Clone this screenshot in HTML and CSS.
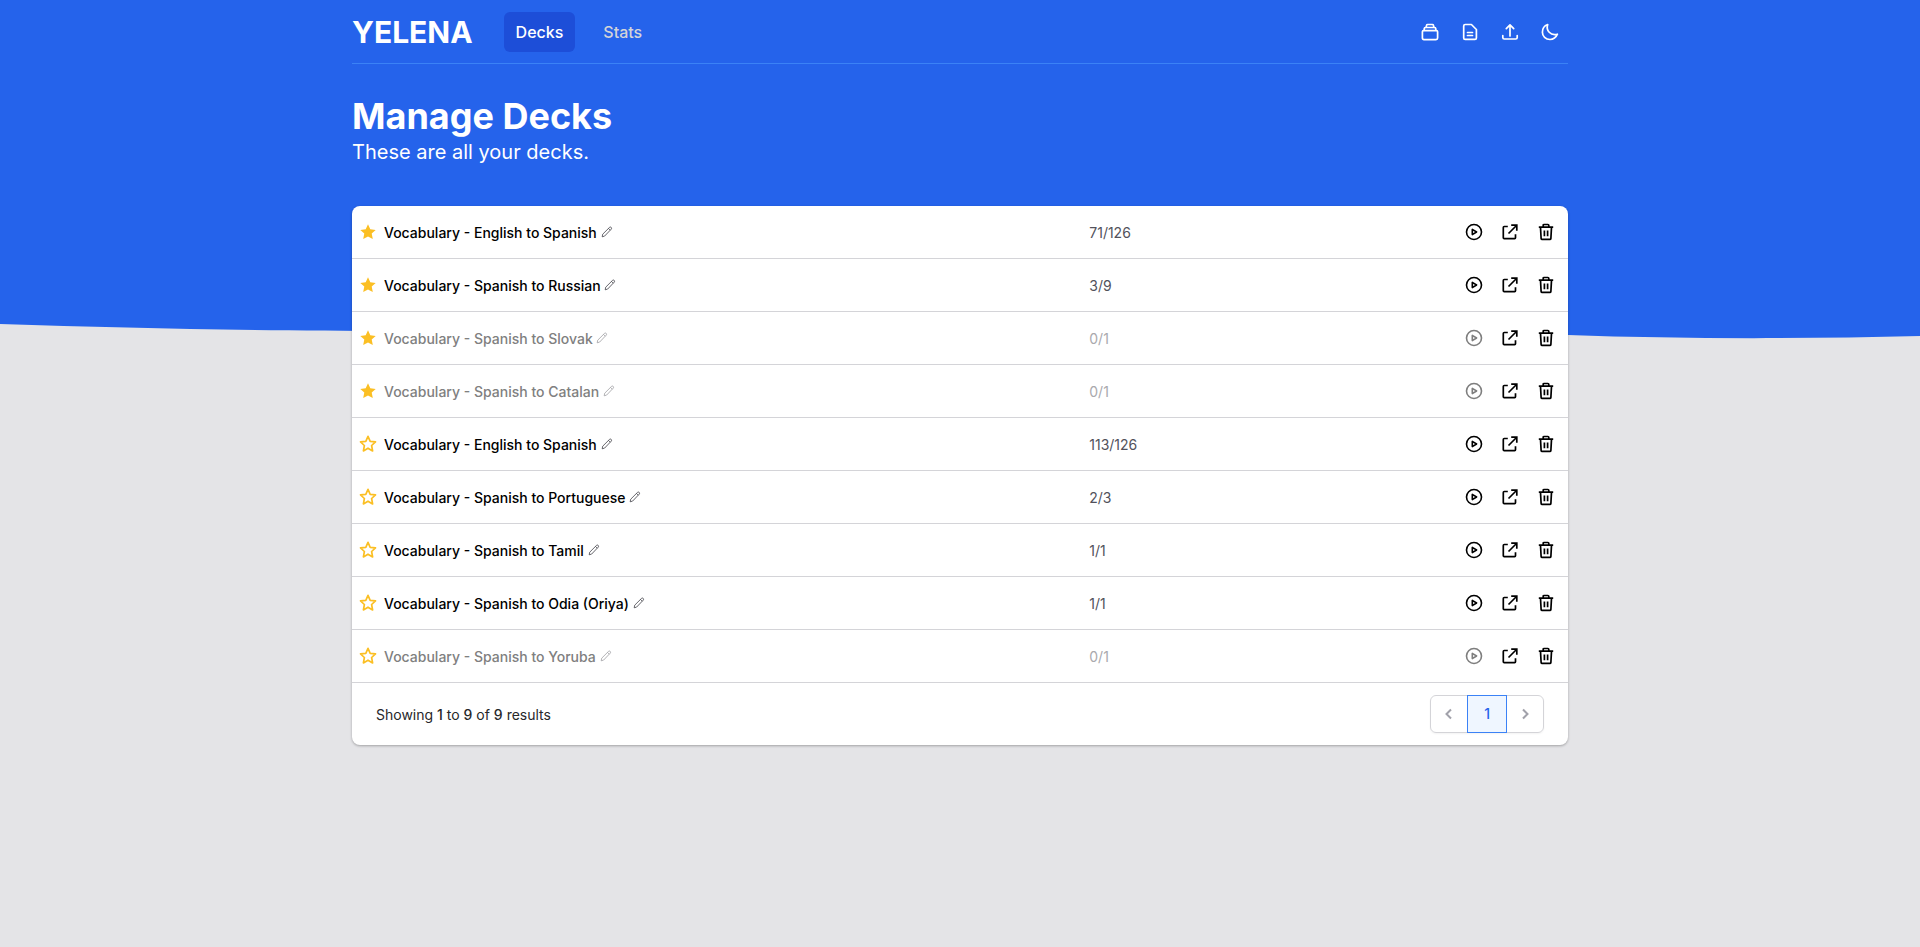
FILE: index.html
```html
<!DOCTYPE html>
<html lang="en">
<head>
<meta charset="utf-8">
<title>Yelena - Manage Decks</title>
<link rel="stylesheet" href="styles.css">
</head>
<body>
<svg class="sprite" aria-hidden="true">
  <symbol id="star-full" viewBox="0 0 20 20"><path d="M10 2.3l2.3 5 5.4.6-4 3.7 1.1 5.5-4.8-2.7-4.8 2.7 1.1-5.5-4-3.7 5.4-.6z" fill="currentColor"/></symbol>
  <symbol id="star-line" viewBox="0 0 20 20"><path d="M10 2.4l2.2 4.9 5.3.6-3.9 3.6 1 5.4-4.6-2.7-4.6 2.7 1-5.4-3.9-3.6 5.3-.6z" fill="none" stroke="currentColor" stroke-width="1.700" stroke-linejoin="round"/></symbol>
  <symbol id="pencil" viewBox="0 0 12 12"><path d="M1.200 10.800l.5-2.600 6.800-6.800q.9-.8 1.700 0t0 1.800L3.600 10.100zM7.500 2.400l1.800 1.800" fill="none" stroke="currentColor" stroke-width=".8" stroke-linejoin="round"/></symbol>
  <symbol id="play" viewBox="0 0 20 20"><g fill="none" stroke="currentColor" stroke-width="1.6" stroke-linejoin="round"><circle cx="10" cy="10" r="7.5"/><path d="M8.3 7.4v5.2L12.6 10z"/></g></symbol>
  <symbol id="export" viewBox="0 0 20 20"><path d="M7.8 4.500H4.2q-.9 0-.9.9v10.4q0 .9.9.9h10.4q.9 0 .9-.9v-3.600M8.5 11.500l8-8M11.200 3.200h5.600v5.600" fill="none" stroke="currentColor" stroke-width="1.700"/></symbol>
  <symbol id="trash" viewBox="0 0 20 20"><path d="M2.8 5.200h14.400M7.200 5V3.400q0-.9.9-.9h3.800q.9 0 .9.900V5M4.500 5.400l.6 10.900q.1 1.100 1.100 1.100h7.600q1 0 1.100-1.100l.6-10.900M8.400 8.400v5.800M11.600 8.400v5.800" fill="none" stroke="currentColor" stroke-width="1.700"/></symbol>
</svg>

<svg class="backdrop" viewBox="0 0 1920 340" preserveAspectRatio="none" aria-hidden="true">
  <path d="M0 0H1920V336C1800 339 1680 339 1568 335L400 331C250 331 130 328 0 324Z"/>
</svg>

<div class="page">
  <header class="topbar">
    <span class="logo">YELENA</span>
    <nav class="nav">
      <a class="nav-link active" href="#decks" aria-current="page">Decks</a>
      <a class="nav-link" href="#stats">Stats</a>
    </nav>
    <div class="tools">
      <button type="button" aria-label="Decks"><svg class="icon" viewBox="0 0 20 20"><path d="M3.600 8.600h12.800q1.200 0 1.200 1.200v6.200q0 1.600-1.600 1.600H4q-1.600 0-1.600-1.600V9.800q0-1.200 1.200-1.200zM4 8.200l.4-1.900q.2-.8 1-.8h9.200q.8 0 1 .8l.4 1.900M6 5.300l.6-2q.2-.8 1-.8h4.800q.8 0 1 .8l.6 2"/></svg></button>
      <button type="button" aria-label="Documents"><svg class="icon" viewBox="0 0 20 20"><path d="M5.200 2.500h6.200l5 5v8.400q0 1.500-1.500 1.500H5.200q-1.500 0-1.500-1.500V4q0-1.500 1.500-1.500zM7.500 10.500h5M7.500 13.500h5"/></svg></button>
      <button type="button" aria-label="Upload"><svg class="icon" viewBox="0 0 20 20"><path d="M10 14V3.200M6.300 6.600L10 2.900l3.700 3.700M2.800 13.500v2q0 1.500 1.500 1.500h11.400q1.500 0 1.500-1.500v-2"/></svg></button>
      <button type="button" aria-label="Dark mode"><svg class="icon" viewBox="0 0 20 20"><path d="M7.700 2.500C5.700 8.500 10.500 14 17.400 12.200 16 15.500 13.200 17.500 10 17.500 5.700 17.500 2.400 14.200 2.400 10.200 2.400 6.500 4.500 3.600 7.700 2.500z"/></svg></button>
    </div>
  </header>

  <main>
    <div class="intro">
      <h1>Manage Decks</h1>
      <p>These are all your decks.</p>
    </div>

    <section class="card">
      <table class="decks">
        <colgroup><col class="col-star"><col class="col-name"><col><col class="col-actions"></colgroup>
        <tbody>
          <tr>
            <td class="star"><button type="button" aria-label="Remove favorite"><svg class="icon"><use href="#star-full"/></svg></button></td>
            <td class="name">Vocabulary - English to Spanish <button type="button" aria-label="Rename"><svg class="pen"><use href="#pencil"/></svg></button></td>
            <td class="count">71/126</td>
            <td><div class="actions"><button type="button" class="play" aria-label="Study"><svg class="icon"><use href="#play"/></svg></button><button type="button" aria-label="Export"><svg class="icon"><use href="#export"/></svg></button><button type="button" aria-label="Delete"><svg class="icon"><use href="#trash"/></svg></button></div></td>
          </tr>
          <tr>
            <td class="star"><button type="button" aria-label="Remove favorite"><svg class="icon"><use href="#star-full"/></svg></button></td>
            <td class="name">Vocabulary - Spanish to Russian <button type="button" aria-label="Rename"><svg class="pen"><use href="#pencil"/></svg></button></td>
            <td class="count">3/9</td>
            <td><div class="actions"><button type="button" class="play" aria-label="Study"><svg class="icon"><use href="#play"/></svg></button><button type="button" aria-label="Export"><svg class="icon"><use href="#export"/></svg></button><button type="button" aria-label="Delete"><svg class="icon"><use href="#trash"/></svg></button></div></td>
          </tr>
          <tr class="empty">
            <td class="star"><button type="button" aria-label="Remove favorite"><svg class="icon"><use href="#star-full"/></svg></button></td>
            <td class="name">Vocabulary - Spanish to Slovak <button type="button" aria-label="Rename"><svg class="pen"><use href="#pencil"/></svg></button></td>
            <td class="count">0/1</td>
            <td><div class="actions"><button type="button" class="play" aria-label="Study" disabled><svg class="icon"><use href="#play"/></svg></button><button type="button" aria-label="Export"><svg class="icon"><use href="#export"/></svg></button><button type="button" aria-label="Delete"><svg class="icon"><use href="#trash"/></svg></button></div></td>
          </tr>
          <tr class="empty">
            <td class="star"><button type="button" aria-label="Remove favorite"><svg class="icon"><use href="#star-full"/></svg></button></td>
            <td class="name">Vocabulary - Spanish to Catalan <button type="button" aria-label="Rename"><svg class="pen"><use href="#pencil"/></svg></button></td>
            <td class="count">0/1</td>
            <td><div class="actions"><button type="button" class="play" aria-label="Study" disabled><svg class="icon"><use href="#play"/></svg></button><button type="button" aria-label="Export"><svg class="icon"><use href="#export"/></svg></button><button type="button" aria-label="Delete"><svg class="icon"><use href="#trash"/></svg></button></div></td>
          </tr>
          <tr>
            <td class="star"><button type="button" aria-label="Add favorite"><svg class="icon"><use href="#star-line"/></svg></button></td>
            <td class="name">Vocabulary - English to Spanish <button type="button" aria-label="Rename"><svg class="pen"><use href="#pencil"/></svg></button></td>
            <td class="count">113/126</td>
            <td><div class="actions"><button type="button" class="play" aria-label="Study"><svg class="icon"><use href="#play"/></svg></button><button type="button" aria-label="Export"><svg class="icon"><use href="#export"/></svg></button><button type="button" aria-label="Delete"><svg class="icon"><use href="#trash"/></svg></button></div></td>
          </tr>
          <tr>
            <td class="star"><button type="button" aria-label="Add favorite"><svg class="icon"><use href="#star-line"/></svg></button></td>
            <td class="name">Vocabulary - Spanish to Portuguese <button type="button" aria-label="Rename"><svg class="pen"><use href="#pencil"/></svg></button></td>
            <td class="count">2/3</td>
            <td><div class="actions"><button type="button" class="play" aria-label="Study"><svg class="icon"><use href="#play"/></svg></button><button type="button" aria-label="Export"><svg class="icon"><use href="#export"/></svg></button><button type="button" aria-label="Delete"><svg class="icon"><use href="#trash"/></svg></button></div></td>
          </tr>
          <tr>
            <td class="star"><button type="button" aria-label="Add favorite"><svg class="icon"><use href="#star-line"/></svg></button></td>
            <td class="name">Vocabulary - Spanish to Tamil <button type="button" aria-label="Rename"><svg class="pen"><use href="#pencil"/></svg></button></td>
            <td class="count">1/1</td>
            <td><div class="actions"><button type="button" class="play" aria-label="Study"><svg class="icon"><use href="#play"/></svg></button><button type="button" aria-label="Export"><svg class="icon"><use href="#export"/></svg></button><button type="button" aria-label="Delete"><svg class="icon"><use href="#trash"/></svg></button></div></td>
          </tr>
          <tr>
            <td class="star"><button type="button" aria-label="Add favorite"><svg class="icon"><use href="#star-line"/></svg></button></td>
            <td class="name">Vocabulary - Spanish to Odia (Oriya) <button type="button" aria-label="Rename"><svg class="pen"><use href="#pencil"/></svg></button></td>
            <td class="count">1/1</td>
            <td><div class="actions"><button type="button" class="play" aria-label="Study"><svg class="icon"><use href="#play"/></svg></button><button type="button" aria-label="Export"><svg class="icon"><use href="#export"/></svg></button><button type="button" aria-label="Delete"><svg class="icon"><use href="#trash"/></svg></button></div></td>
          </tr>
          <tr class="empty">
            <td class="star"><button type="button" aria-label="Add favorite"><svg class="icon"><use href="#star-line"/></svg></button></td>
            <td class="name">Vocabulary - Spanish to Yoruba <button type="button" aria-label="Rename"><svg class="pen"><use href="#pencil"/></svg></button></td>
            <td class="count">0/1</td>
            <td><div class="actions"><button type="button" class="play" aria-label="Study" disabled><svg class="icon"><use href="#play"/></svg></button><button type="button" aria-label="Export"><svg class="icon"><use href="#export"/></svg></button><button type="button" aria-label="Delete"><svg class="icon"><use href="#trash"/></svg></button></div></td>
          </tr>
        </tbody>
      </table>
      <footer class="summary">
        <p>Showing <b>1</b> to <b>9</b> of <b>9</b> results</p>
        <nav class="pager" aria-label="Pagination">
          <button type="button" class="page-step" aria-label="Previous" disabled><svg class="icon" viewBox="0 0 20 20"><path d="M12 5.500L7.500 10l4.500 4.500"/></svg></button>
          <button type="button" class="page-current" aria-current="page">1</button>
          <button type="button" class="page-step" aria-label="Next" disabled><svg class="icon" viewBox="0 0 20 20"><path d="M8 5.500l4.500 4.500L8 14.500"/></svg></button>
        </nav>
      </footer>
    </section>
  </main>
</div>
</body>
</html>
```
FILE: styles.css
```css
* {
  box-sizing: border-box;
}

body {
  margin: 0;
  min-height: 100vh;
  background: #e4e4e7;
  color: #000;
  font: 14px/20px Inter, "Liberation Sans", sans-serif;
}

h1,
p {
  margin: 0;
}

button {
  margin: 0;
  padding: 0;
  border: 0;
  background: none;
  color: inherit;
  font: inherit;
  cursor: pointer;
}

.sprite {
  position: absolute;
  width: 0;
  height: 0;
}

.icon {
  display: block;
  width: 20px;
  height: 20px;
}

/* Blue curved band behind the header and the top of the card */
.backdrop {
  position: absolute;
  top: 0;
  left: 0;
  z-index: -1;
  width: 100%;
  height: 340px;
  fill: #2563eb;
}

.page {
  max-width: 1280px;
  margin: 0 auto;
  padding: 0 32px;
}

.topbar {
  display: flex;
  align-items: center;
  height: 64px;
  border-bottom: 1px solid #3b82f6;
}

.logo {
  color: #fff;
  font-size: 30px;
  font-weight: 700;
  line-height: 36px;
}

.nav {
  display: flex;
  gap: 16px;
  margin-left: 31px;
}

.nav-link {
  padding: 8px 12px;
  border-radius: 6px;
  color: #d4d4d8;
  font-size: 16px;
  font-weight: 500;
  line-height: 24px;
  text-decoration: none;
}

.nav-link.active {
  background: #1d4ed8;
  color: #fff;
}

.tools {
  display: flex;
  gap: 4px;
  margin-left: auto;
  color: #fff;
}

.tools button {
  padding: 8px;
}

.tools .icon {
  fill: none;
  stroke: currentColor;
  stroke-width: 1.7;
  stroke-linejoin: round;
  stroke-linecap: round;
}

.intro {
  padding: 32px 0 40px;
  color: #fff;
}

.intro h1 {
  font-size: 36px;
  font-weight: 700;
  line-height: 40px;
}

.intro p {
  margin-top: 2px;
  font-size: 20px;
  line-height: 28px;
}

.card {
  overflow: hidden;
  border-radius: 8px;
  background: #fff;
  box-shadow: 0 1px 3px rgba(0, 0, 0, 0.2), 0 1px 2px rgba(0, 0, 0, 0.1);
}

.decks {
  width: 100%;
  table-layout: fixed;
  border-collapse: separate;
  border-spacing: 0;
}

.col-star {
  width: 32px;
}

.col-name {
  width: 58%;
}

.col-actions {
  width: 160px;
}

.decks td {
  height: 53px;
  padding: 0;
  border-bottom: 1px solid #d4d4d8;
  vertical-align: middle;
}

.decks .star {
  padding-left: 6px;
  color: #fbbf24;
}

.star button {
  display: block;
}

.name {
  font-weight: 500;
}

.decks .name,
.decks .count {
  padding-top: 2px;
}

.name button {
  color: #3f3f46;
}

.pen {
  display: block;
  width: 12px;
  height: 12px;
}

.count {
  color: #52525b;
}

.empty .name {
  color: #808080;
}

.empty .name button {
  color: #9f9fa3;
}

.empty .count {
  color: #a9a9ad;
}

.play:disabled {
  opacity: 0.5;
}

.actions {
  display: flex;
  justify-content: flex-end;
  gap: 16px;
  padding-right: 12px;
}

.summary {
  display: flex;
  align-items: center;
  justify-content: space-between;
  padding: 12px 24px;
  color: #27272a;
}

.summary p {
  padding-top: 2px;
}

.summary b {
  font-weight: 500;
}

.pager {
  display: flex;
  border-radius: 6px;
  box-shadow: 0 1px 2px rgba(0, 0, 0, 0.05);
}

.page-step {
  padding: 8px;
  border: 1px solid #d4d4d8;
  color: #a1a1aa;
}

.page-step:first-child {
  border-radius: 6px 0 0 6px;
}

.page-step:last-child {
  border-radius: 0 6px 6px 0;
}

.page-step .icon {
  fill: none;
  stroke: currentColor;
  stroke-width: 2;
}

.page-current {
  z-index: 1;
  margin: 0 -1px;
  padding: 8px 16px;
  border: 1px solid #3b82f6;
  background: #eff6ff;
  color: #2563eb;
  font-weight: 500;
}
```
